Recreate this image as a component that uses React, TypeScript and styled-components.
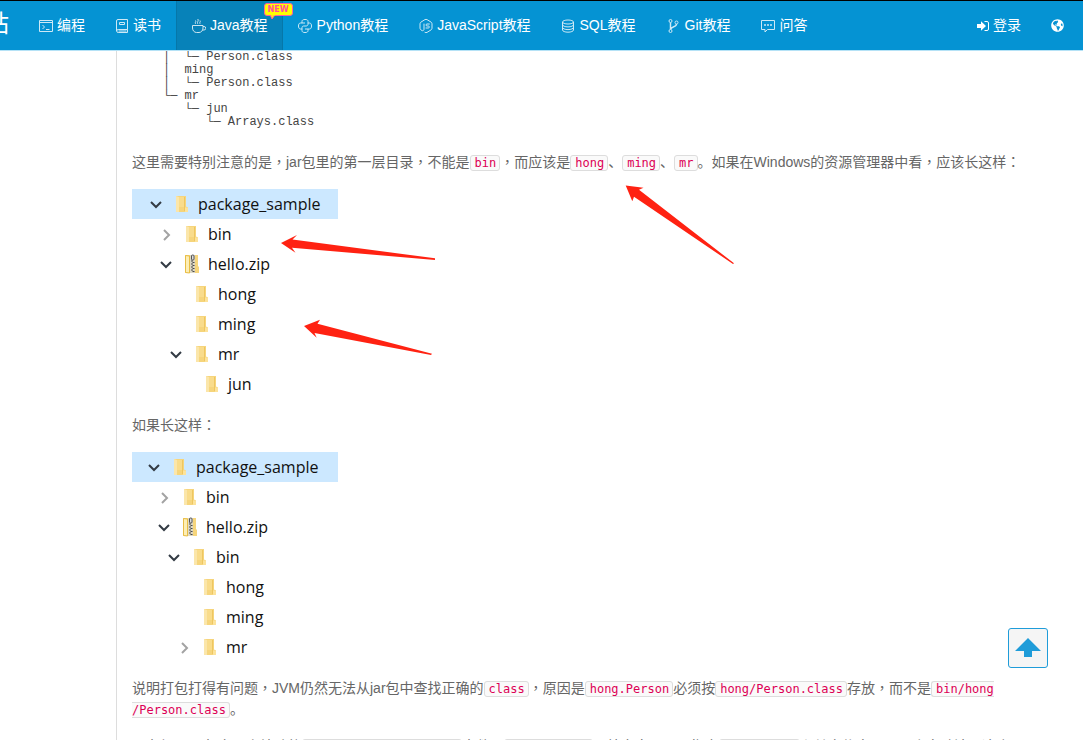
import React from "react";
import styled, { createGlobalStyle, css } from "styled-components";
import { TbBrandNodejs } from "react-icons/tb";
import { FaGlobeAmericas } from "react-icons/fa";

const GlobalStyle = createGlobalStyle`
  *, *::before, *::after { box-sizing: border-box; }
  html, body, #root { height: 100%; }
  body {
    margin: 0;
    overflow: hidden;
    background: #fff;
    color: #666;
    font: 14px/21px "Liberation Sans", "Noto Sans CJK SC", sans-serif;
  }
`;

const Page = styled.div`
  height: 100%;
  overflow: hidden;
  display: flex;
  flex-direction: column;
`;

const Header = styled.header`
  position: relative;
  z-index: 2;
  flex: none;
  display: flex;
  height: 50px;
  border-top: 1px solid #000;
  background: #0593d3;
  box-shadow: 0 1px 0 #b5e2f6;
`;

const Brand = styled.a`
  display: flex;
  justify-content: flex-end;
  align-items: center;
  width: 9px;
  margin-right: 15px;
  overflow: hidden;
  color: #fff;
  font-size: 24px;
  line-height: 46px;
  height: 46px;
  text-decoration: none;
`;

const Nav = styled.nav`
  display: flex;
`;

const UserNav = styled(Nav)`
  margin-left: auto;
  margin-right: 5px;
`;

const NavLink = styled.a<{ $active?: boolean }>`
  position: relative;
  display: flex;
  align-items: center;
  gap: 4px;
  padding: 0 15px;
  color: #fff;
  text-decoration: none;
  white-space: nowrap;
  ${(p) =>
    p.$active &&
    css`
      background: #0782b9;
      box-shadow: inset 1px 0 0 #0677a9, inset -1px 0 0 #0677a9;
    `}
`;

const NavIcon = styled.span<{ $width: number; $solid?: boolean }>`
  display: flex;
  justify-content: center;
  width: ${(p) => p.$width}px;
  opacity: ${(p) => (p.$solid ? 1 : 0.8)};
  svg {
    flex: none;
    display: block;
  }
`;

const NewBadge = styled.span`
  position: absolute;
  top: 2px;
  right: -10px;
  width: 29px;
  height: 13px;
  border: 1px solid #ff5fa0;
  border-radius: 3px;
  background: #ff0;
  color: #ff4f9a;
  font: bold 8px/11px "DejaVu Sans", sans-serif;
  text-align: center;
  svg {
    position: absolute;
    top: 10px;
    left: 5px;
  }
`;

const Article = styled.main`
  flex: 1;
  min-height: 0;
  overflow: hidden;
  margin-left: 116px;
  padding: 1px 57px 0 15px;
  border-left: 1px solid #ddd;
`;

const Listing = styled.pre`
  margin: 0 0 23px;
  padding-left: 31px;
  color: #444;
  font: 12px/13px "Liberation Mono", monospace;
`;

const Paragraph = styled.p`
  margin: 0 0 16px;
`;

/* Commas and colons are set in the middle of their square. */
const Mark = styled.span`
  font-family: "Noto Sans CJK TC", sans-serif;
  line-height: 1;
`;

const Code = styled.code`
  padding: 0 3px 0 4px;
  border: 1px solid #ddd;
  border-radius: 3px;
  background: #fafafa;
  color: #d05;
  font: 12px/14px "DejaVu Sans Mono", monospace;
`;

const Figure = styled.figure`
  position: relative;
  margin: 0 0 15px;
  padding-bottom: 1px;
`;

const Tree = styled.ul`
  width: 206px;
  margin: 0;
  padding: 0;
  list-style: none;
  color: #111;
  font: 16px/30px "Open Sans", "Noto Sans", sans-serif;
`;

const TreeRow = styled.li<{ $indent: number; $selected?: boolean }>`
  display: flex;
  align-items: center;
  height: 30px;
  padding-left: ${(p) => p.$indent}px;
  background: ${(p) => (p.$selected ? "#cce8ff" : "transparent")};
`;

const ChevronSlot = styled.span`
  display: flex;
  justify-content: center;
  width: 20px;
  margin-right: 8px;
`;

const FileSlot = styled.span`
  display: flex;
  width: 16px;
  margin-right: 8px;
`;

const Arrows = styled.svg`
  position: absolute;
  top: -4px;
  left: 0;
  pointer-events: none;
`;

const ToTop = styled.button`
  position: fixed;
  right: 35px;
  bottom: 72px;
  display: flex;
  align-items: center;
  justify-content: center;
  width: 40px;
  height: 40px;
  padding: 0;
  border: 1px solid #1f9cd9;
  border-radius: 3px;
  background: #f5f5f5;
`;

const Line = ({ children }: { children: React.ReactNode }) => (
  <svg width="14" height="14" viewBox="0 0 14 14" fill="none" stroke="#fff" strokeWidth="1" aria-hidden="true">
    {children}
  </svg>
);

const TerminalIcon = () => (
  <Line>
    <path d="M.5 1.5h13v11H.5zM.5 3.5h13M3.5 6l2 2-2 2M7 10.5h3.5" />
  </Line>
);

const BookIcon = () => (
  <Line>
    <path d="M3 .5h9.5v10H3.2a1.5 1.5 0 0 0 0 3h9.3M1.5 12V2A1.5 1.5 0 0 1 3 .5M12.5 10.5v3M4.5 3.5h5v2h-5zM3.5 12h8" />
  </Line>
);

const CupIcon = () => (
  <Line>
    <path d="M.5 6.5h10.500v2.500c0 2.500-1.800 4.500-4 4.500H4.500c-2.200 0-4-2-4-4.500zM11 7.500h1a1.500 1.500 0 0 1 0 3.500h-1.700M3.500 4.800c-1-1.500 1-1.800 0-3.300M5.700 4.800c-1-1.500 1.200-2.800.2-4.800M8 4.800c-1-1.500 1-1.800 0-3.300" />
  </Line>
);

const PythonIcon = () => (
  <Line>
    <path d="M7 4H2.500C1 4 .5 5.500.5 7s.5 3 2 3H4V8.500C4 7.500 4.800 7 5.800 7H8c1.200 0 2-.8 2-1.800V2.500C10 1 9 .5 7 .5S4 1 4 2.500V4" />
    <path d="M7 10h4.500c1.500 0 2-1.500 2-3s-.5-3-2-3H10M4 10v1.500c0 1.500 1 2 3 2s3-.5 3-2V10" />
  </Line>
);

const DatabaseIcon = () => (
  <Line>
    <ellipse cx="7" cy="3" rx="5.500" ry="2" />
    <path d="M1.500 3v8c0 1.200 2.500 2.200 5.500 2.200s5.500-1 5.500-2.200V3M1.500 5.700c0 1.200 2.500 2.200 5.500 2.200s5.500-1 5.500-2.200M1.500 8.400c0 1.200 2.500 2.200 5.500 2.200s5.500-1 5.500-2.200" />
  </Line>
);

const BranchIcon = () => (
  <Line>
    <circle cx="4.500" cy="2" r="1.500" />
    <circle cx="10.500" cy="3.500" r="1.500" />
    <circle cx="4.500" cy="12" r="1.500" />
    <path d="M4.500 3.500v7M10.500 5c0 3.500-5.500 2-5.800 5.500" strokeWidth="1.500" />
  </Line>
);

const ChatIcon = () => (
  <Line>
    <path d="M.5 1.500h13v9H6.500l-2.500 2.500v-2.500H.5z" />
    <path d="M3 6h2M6 6h2M9 6h2" strokeWidth="1.500" />
  </Line>
);

const LoginIcon = () => (
  <svg width="12" height="12" viewBox="0 0 12 12" aria-hidden="true">
    <path d="M0 4h4V1.200L9 6l-5 4.800V8H0z" fill="#fff" />
    <path d="M7.500 1.500H10A1.500 1.500 0 0 1 11.500 3v6a1.500 1.500 0 0 1-1.500 1.500H7.500" fill="none" stroke="#fff" />
  </svg>
);

const Chevron = ({ open }: { open: boolean }) => (
  <svg width="14" height="14" viewBox="0 0 14 14" fill="none" aria-hidden="true">
    {open ? (
      <path d="M2 5l5 5 5-5" stroke="#333b44" strokeWidth="2" />
    ) : (
      <path d="M5 3l5 5-5 5" stroke="#a3a3a3" strokeWidth="2" />
    )}
  </svg>
);

const FolderIcon = () => (
  <svg width="16" height="18" viewBox="0 0 16 18" aria-hidden="true">
    <path d="M2 1h10v10.500l2 1V17H2z" fill="#f6d57c" />
    <path d="M2 1l3 1v15H2z" fill="#fbe6aa" />
    <path d="M5 2h6v10H5z" fill="#f9dc8c" />
    <path d="M11 12.500h3V17h-3z" fill="#fde39a" />
    <path d="M10.500 2v14" stroke="#eec661" />
  </svg>
);

const ZipIcon = () => (
  <svg width="16" height="20" viewBox="0 0 16 20" aria-hidden="true">
    <path d="M1 1h13v11l1 1v6H1z" fill="#f6d57c" />
    <path d="M1.500 1.500l4 .5v17l-4-.5z" fill="#fdeeb4" stroke="#e8bd45" />
    <path d="M6 1h5v18H6z" fill="#ded8c4" />
    <path d="M7 7h2M8.500 8.500h2M7 10h2M8.500 11.500h2M7 13h2M8.500 14.500h2M7 16h2M8.500 17.500h2" stroke="#494949" />
    <rect x="7.500" y="1" width="2.500" height="5" rx="1" fill="#ddd" stroke="#555" />
  </svg>
);

type Entry = { name: string; level: number; open?: boolean; zip?: boolean };

const goodTree: Entry[] = [
  { name: "package_sample", level: 0, open: true },
  { name: "bin", level: 1, open: false },
  { name: "hello.zip", level: 1, open: true, zip: true },
  { name: "hong", level: 2 },
  { name: "ming", level: 2 },
  { name: "mr", level: 2, open: true },
  { name: "jun", level: 3 },
];

const badTree: Entry[] = [
  { name: "package_sample", level: 0, open: true },
  { name: "bin", level: 1, open: false },
  { name: "hello.zip", level: 1, open: true, zip: true },
  { name: "bin", level: 2, open: true },
  { name: "hong", level: 3 },
  { name: "ming", level: 3 },
  { name: "mr", level: 3, open: false },
];

/* The slot of a row that cannot be opened stays empty. */
const FileTree = ({ entries, inset }: { entries: Entry[]; inset: number }) => (
  <Tree>
    {entries.map((e, i) => (
      <TreeRow key={i} $indent={inset + e.level * 10} $selected={i === 0}>
        <ChevronSlot>{e.open !== undefined && <Chevron open={e.open} />}</ChevronSlot>
        <FileSlot>{e.zip ? <ZipIcon /> : <FolderIcon />}</FileSlot>
        {e.name}
      </TreeRow>
    ))}
  </Tree>
);

const links = [
  { label: "编程", icon: <TerminalIcon />, width: 14 },
  { label: "读书", icon: <BookIcon />, width: 14 },
  { label: "Java教程", icon: <CupIcon />, width: 15, active: true },
  { label: "Python教程", icon: <PythonIcon />, width: 15 },
  { label: "JavaScript教程", icon: <TbBrandNodejs size={16} strokeWidth={1.5} />, width: 15 },
  { label: "SQL教程", icon: <DatabaseIcon />, width: 15 },
  { label: "Git教程", icon: <BranchIcon />, width: 15 },
  { label: "问答", icon: <ChatIcon />, width: 15 },
];

const listing = `│  └─ Person.class
│  ming
│  └─ Person.class
└─ mr
   └─ jun
      └─ Arrays.class`;

export default function App() {
  return (
    <Page>
      <GlobalStyle />
      <Header>
        <Brand href="#">站</Brand>
        <Nav>
          {links.map((l) => (
            <NavLink key={l.label} href="#" $active={l.active}>
              <NavIcon $width={l.width}>{l.icon}</NavIcon>
              {l.label}
              {l.active && (
                <NewBadge>
                  NEW
                  <svg width="6" height="6" viewBox="0 0 6 6" aria-hidden="true">
                    <path d="M.5 1.500L2 5l2.500-3.500" fill="#ff0" stroke="#ff5fa0" />
                    <path d="M1 0h4v1.500H1z" fill="#ff0" />
                  </svg>
                </NewBadge>
              )}
            </NavLink>
          ))}
        </Nav>
        <UserNav>
          <NavLink href="#">
            <NavIcon $width={12} $solid>
              <LoginIcon />
            </NavIcon>
            登录
          </NavLink>
          <NavLink href="#" aria-label="Language">
            <NavIcon $width={12} $solid>
              <FaGlobeAmericas size={13} />
            </NavIcon>
          </NavLink>
        </UserNav>
      </Header>
      <Article>
        <Listing>{listing}</Listing>
        <Paragraph>
          这里需要特别注意的是<Mark>，</Mark>jar包里的第一层目录<Mark>，</Mark>不能是<Code>bin</Code>
          <Mark>，</Mark>而应该是<Code>hong</Code>、<Code>ming</Code>、<Code>mr</Code>
          。如果在Windows的资源管理器中看<Mark>，</Mark>应该长这样<Mark>：</Mark>
        </Paragraph>
        <Figure>
          <FileTree entries={goodTree} inset={14} />
          <Arrows width="610" height="180" viewBox="0 0 610 180" fill="#ff2212" aria-hidden="true">
            <path d="M149 58L165 50 160.500 54.500 303 73.300V75L160 62.700 163.500 67.700z" />
            <path d="M172 141L188 134.700 185.500 138.700 300 168.700 299 170 182.500 148 184.700 152.700z" />
            <path d="M493.700.5L511.500 2.700 507 4.700 602 78.300 601 79 502 11.700 500.300 16.300z" />
          </Arrows>
        </Figure>
        <Paragraph>
          如果长这样<Mark>：</Mark>
        </Paragraph>
        <Figure>
          <FileTree entries={badTree} inset={12} />
        </Figure>
        <Paragraph>
          说明打包打得有问题<Mark>，</Mark>JVM仍然无法从jar包中查找正确的<Code>class</Code>
          <Mark>，</Mark>原因是<Code>hong.Person</Code>必须按<Code>hong/Person.class</Code>存放
          <Mark>，</Mark>而不是<Code>bin/hong<wbr />/Person.class</Code>。
        </Paragraph>
        <Paragraph>
          jar包还可以包含一个特殊的<Code>/META-INF/MANIFEST.MF</Code>文件<Mark>，</Mark>
          <Code>MANIFEST.MF</Code>是纯文本<Mark>，</Mark>可以指定<Code>Main-Class</Code>
          和其它信息。JVM会自动读取这个
        </Paragraph>
      </Article>
      <ToTop type="button" aria-label="Back to top">
        <svg width="26" height="20" viewBox="0 0 26 20" aria-hidden="true">
          <path d="M13 0L26 13H17v6H9v-6H0z" fill="#1f9cd9" />
        </svg>
      </ToTop>
    </Page>
  );
}
